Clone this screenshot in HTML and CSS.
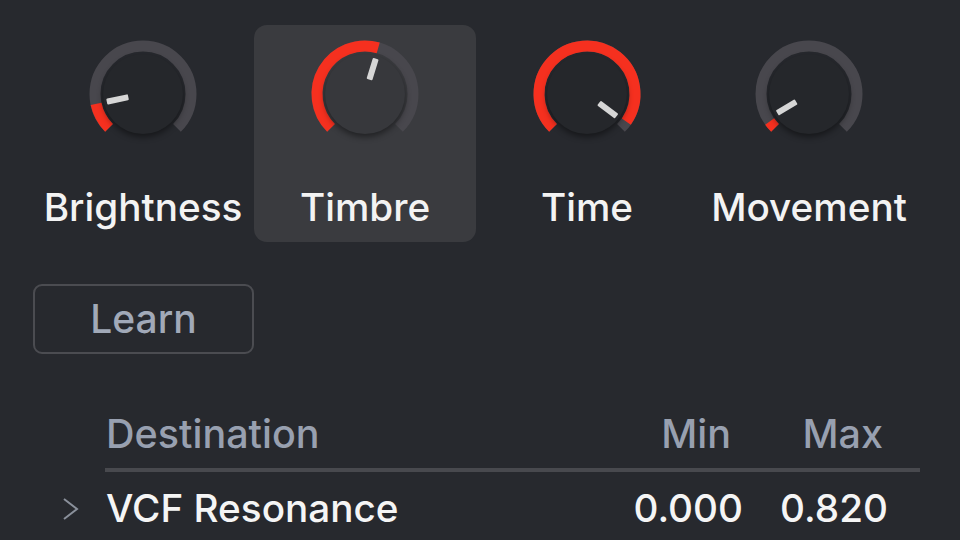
FILE: index.html
```html
<!DOCTYPE html>
<html>
<head>
<meta charset="utf-8">
<link rel="stylesheet" href="styles.css">
</head>
<body>
<div class="panel">
  <div class="knobs">
    <div class="knob-cell">
      <svg class="knob" viewBox="0 0 120 120" width="120" height="120">
        <path class="track" d="M26.06 93.94 A48 48 0 1 1 93.94 93.94"/>
        <path class="value" d="M26.06 93.94 A48 48 0 0 1 13.05 69.98"/>
        <circle class="body" cx="60" cy="60" r="40"/>
        <rect class="ind" x="57" y="23" width="6" height="22" rx="1" transform="rotate(-102 60 60)"/>
      </svg>
      <div class="label">Brightness</div>
    </div>
    <div class="knob-cell active">
      <svg class="knob" viewBox="0 0 120 120" width="120" height="120">
        <path class="track" d="M26.06 93.94 A48 48 0 1 1 93.94 93.94"/>
        <path class="value" d="M26.06 93.94 A48 48 0 0 1 73.23 13.86"/>
        <circle class="body" cx="60" cy="60" r="40"/>
        <rect class="ind" x="57" y="23" width="6" height="22" rx="1" transform="rotate(17 60 60)"/>
      </svg>
      <div class="label">Timbre</div>
    </div>
    <div class="knob-cell">
      <svg class="knob" viewBox="0 0 120 120" width="120" height="120">
        <path class="track" d="M26.06 93.94 A48 48 0 1 1 93.94 93.94"/>
        <path class="value" d="M26.06 93.94 A48 48 0 1 1 99.32 87.53"/>
        <circle class="body" cx="60" cy="60" r="40"/>
        <rect class="ind" x="57" y="23" width="6" height="22" rx="1" transform="rotate(127 60 60)"/>
      </svg>
      <div class="label">Time</div>
    </div>
    <div class="knob-cell">
      <svg class="knob" viewBox="0 0 120 120" width="120" height="120">
        <path class="track" d="M26.06 93.94 A48 48 0 1 1 93.94 93.94"/>
        <path class="value" d="M26.06 93.94 A48 48 0 0 1 20.68 87.53"/>
        <circle class="body" cx="60" cy="60" r="40"/>
        <rect class="ind" x="57" y="23" width="6" height="22" rx="1" transform="rotate(-121 60 60)"/>
      </svg>
      <div class="label">Movement</div>
    </div>
  </div>

  <button class="learn">Learn</button>

  <div class="table">
    <div class="thead">
      <span class="h-dest">Destination</span>
      <span class="h-min">Min</span>
      <span class="h-max">Max</span>
    </div>
    <div class="row">
      <span class="chev"><svg viewBox="0 0 18 24" width="18" height="24"><path d="M2 2 L15 12 L2 22"/></svg></span>
      <span class="r-name">VCF Resonance</span>
      <span class="r-min">0.000</span>
      <span class="r-max">0.820</span>
    </div>
  </div>
</div>
</body>
</html>
```

FILE: styles.css
```css
html, body {
  margin: 0;
  padding: 0;
  background: #27292e;
  overflow: hidden;
}
body {
  width: 960px;
  height: 540px;
  font-family: "Inter", "Noto Sans", sans-serif;
  font-weight: 500;
}
.panel {
  padding: 25px 40px 0 32px;
}
.knobs {
  display: grid;
  grid-template-columns: repeat(4, 222px);
}
.knob-cell {
  height: 217px;
  box-sizing: border-box;
  padding-top: 9px;
  display: flex;
  flex-direction: column;
  align-items: center;
  border-radius: 13px;
}
.knob-cell.active {
  background: #3a3b3f;
}
.knob {
  display: block;
  overflow: visible;
}
.knob .track {
  fill: none;
  stroke: #48474d;
  stroke-width: 11;
}
.knob .value {
  fill: none;
  stroke: #f5301f;
  stroke-width: 11;
}
.knob .body {
  fill: #25272b;
  filter: drop-shadow(0 3px 3px rgba(0, 0, 0, 0.45));
}
.knob-cell.active .body {
  fill: #37383c;
}
.knob .ind {
  fill: #d6d6d6;
}
.label {
  margin-top: 30px;
  font-size: 38.7px;
  line-height: 46px;
  color: #f3f3f3;
}
.learn {
  display: block;
  margin-top: 42px;
  margin-left: 1px;
  width: 221px;
  height: 70px;
  box-sizing: border-box;
  border: 2px solid #4b4c51;
  border-radius: 9px;
  background: transparent;
  font-family: "Inter", "Noto Sans", sans-serif;
  font-weight: 500;
  font-size: 39px;
  line-height: 46px;
  color: #a1a9b8;
  padding: 0;
}
.table {
  margin-top: 57px;
}
.thead {
  margin-left: 73px;
  display: grid;
  grid-template-columns: 1fr 150px 177px;
  font-size: 39.5px;
  line-height: 46px;
  color: #98a0b0;
  padding-bottom: 11px;
  border-bottom: 4px solid #48494e;
}
.h-min {
  text-align: right;
  padding-right: 12px;
}
.h-max {
  text-align: right;
  padding-right: 37px;
}
.h-dest {
  padding-left: 1px;
}
.row {
  margin-top: 13px;
  display: grid;
  grid-template-columns: 73px 1fr 150px 177px;
  font-size: 38.7px;
  line-height: 46px;
  color: #f5f5f5;
}
.chev {
  display: flex;
  align-items: center;
  padding-left: 30px;
}
.chev svg {
  display: block;
  margin-top: 2px;
}
.chev path {
  fill: none;
  stroke: #8a909b;
  stroke-width: 2;
}
.r-name {
  padding-left: 1px;
}
.r-min {
  text-align: right;
}
.r-max {
  text-align: right;
  padding-right: 32px;
}
```
